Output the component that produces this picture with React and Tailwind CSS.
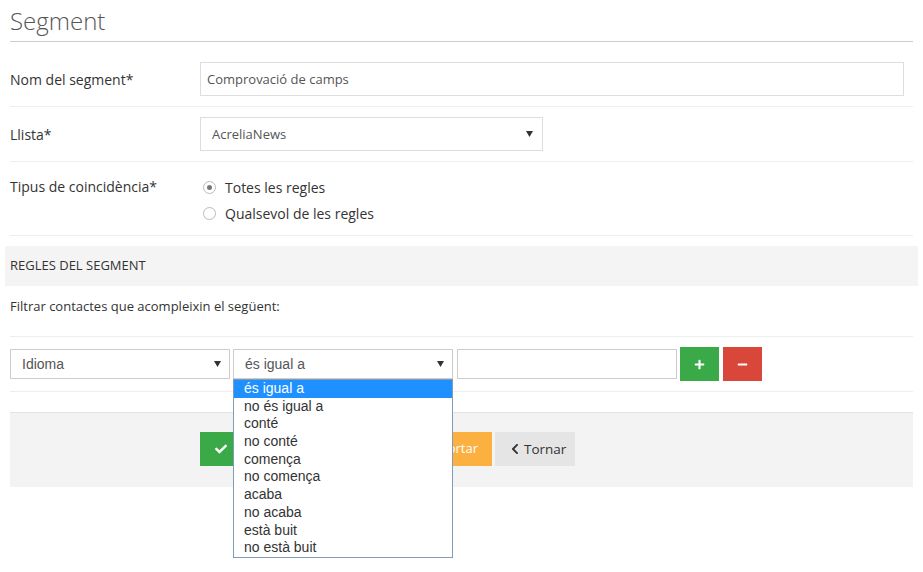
import React from "react";
import { FaCheck, FaChevronLeft, FaPlus, FaMinus } from "react-icons/fa";

function Arrow() {
  return (
    <svg width="7" height="6" viewBox="0 0 7 6" className="shrink-0">
      <path d="M0 0 L7 0 L3.5 6 Z" fill="#333" />
    </svg>
  );
}

const items = [
  "és igual a",
  "no és igual a",
  "conté",
  "no conté",
  "comença",
  "no comença",
  "acaba",
  "no acaba",
  "està buit",
  "no està buit",
];

export default function App() {
  return (
    <div className="relative w-[923px] h-[572px] overflow-hidden bg-white font-['Open_Sans',sans-serif] text-[#333]">
      <div className="mx-[10px]">
        {/* Title */}
        <div className="h-[42px] border-b border-[#ccc] pt-[4px]">
          <h1 className="text-[24px] leading-[33px] font-light text-[#555]">Segment</h1>
        </div>

        {/* Row 1 */}
        <div className="mt-[10px] py-[10px] flex items-center border-b border-[#eee]">
          <div className="w-[190px] text-[14px]">Nom del segment*</div>
          <div className="w-[704px] h-[34px] border border-[#ddd] flex items-center pt-[2px] px-[6px] text-[13px] text-[#555]">
            Comprovació de camps
          </div>
        </div>

        {/* Row 2 */}
        <div className="py-[10px] flex items-center border-b border-[#eee]">
          <div className="w-[190px] text-[14px]">Llista*</div>
          <div className="w-[343px] h-[34px] border border-[#ddd] flex items-center justify-between pl-[11px] pr-[9px] text-[13px] text-[#555]">
            <span className="pt-[2px]">AcreliaNews</span>
            <Arrow />
          </div>
        </div>

        {/* Row 3 */}
        <div className="pt-[12px] pb-[9px] flex items-start border-b border-[#eee]">
          <div className="w-[190px] text-[14px] leading-[26px]">Tipus de coincidència*</div>
          <div className="flex flex-col">
            <div className="h-[26px] flex items-center text-[14px]">
              <span className="ml-[3px] w-[13px] h-[13px] rounded-full border border-[#bbb] flex items-center justify-center bg-white">
                <span className="w-[5px] h-[5px] rounded-full bg-[#777]" />
              </span>
              <span className="ml-[9px]">Totes les regles</span>
            </div>
            <div className="h-[26px] flex items-center text-[14px]">
              <span className="ml-[3px] w-[13px] h-[13px] rounded-full border border-[#bbb] bg-white" />
              <span className="ml-[9px]">Qualsevol de les regles</span>
            </div>
          </div>
        </div>

        {/* Rules header */}
        <div className="mt-[10px] -mx-[5px] px-[5px] h-[40px] bg-[#f4f4f4] flex items-center text-[13px]">
          REGLES DEL SEGMENT
        </div>

        <div className="h-[51px] border-b border-[#eee] pt-[11px] text-[13px] leading-[18px]">
          Filtrar contactes que acompleixin el següent:
        </div>

        {/* Rules row */}
        <div className="py-[10px] flex items-center border-b border-[#eee] font-['Liberation_Sans',Arial,sans-serif] text-[14px] text-[#555]">
          <div className="w-[220px] h-[30px] border border-[#ccc] flex items-center justify-between pl-[11px] pr-[8px]">
            <span>Idioma</span>
            <Arrow />
          </div>
          <div className="ml-[3px] w-[220px] h-[30px] border border-[#ccc] flex items-center justify-between pl-[11px] pr-[8px]">
            <span>és igual a</span>
            <Arrow />
          </div>
          <div className="ml-[4px] w-[220px] h-[30px] border border-[#ccc]" />
          <div className="ml-[3px] w-[39px] h-[34px] bg-[#3aaa49] flex items-center justify-center text-white">
            <FaPlus size={11} />
          </div>
          <div className="ml-[4px] w-[39px] h-[34px] bg-[#d9473a] flex items-center justify-center text-white">
            <FaMinus size={11} />
          </div>
        </div>

        {/* Footer */}
        <div className="mt-[20px] h-[75px] border-t border-[#e3e3e3] bg-[#f3f3f3] pt-[19px] pl-[190px] flex items-start text-[13px]">
          <div className="w-[206px] h-[34px] bg-[#3aaa49] text-white flex items-center pl-[15px]">
            <FaCheck size={12} />
          </div>
          <div className="ml-[3px] w-[83px] h-[34px] bg-[#fbb040] text-white flex items-center justify-end pr-[14px]">
            Exportar
          </div>
          <div className="ml-[3px] w-[80px] h-[34px] bg-[#e5e5e5] text-[#333] flex items-center pl-[14px] gap-[3px] text-[13.5px]">
            <FaChevronLeft size={12} />
            <span>Tornar</span>
          </div>
        </div>
      </div>

      {/* Dropdown list */}
      <div className="absolute left-[233px] top-[379px] w-[220px] h-[179px] border border-[#7f9db9] bg-white font-['Liberation_Sans',Arial,sans-serif] text-[14px] text-[#333]">
        {items.map((it, i) => (
          <div
            key={it}
            className={
              i === 0
                ? "h-[17.7px] leading-[17.7px] pl-[10px] bg-[#1e90ff] text-white"
                : "h-[17.7px] leading-[17.7px] pl-[10px]"
            }
          >
            {it}
          </div>
        ))}
      </div>
    </div>
  );
}
